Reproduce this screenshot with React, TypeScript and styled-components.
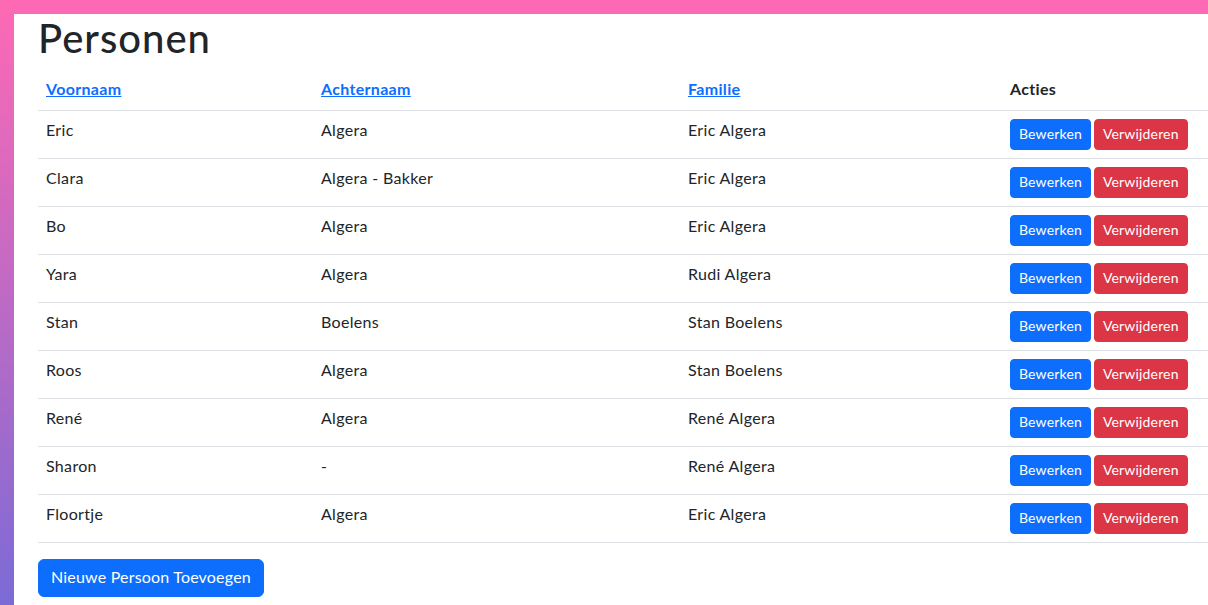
import React from "react";
import styled, { createGlobalStyle } from "styled-components";

const Global = createGlobalStyle`
  html, body { margin: 0; padding: 0; }
  body {
    width: 1208px;
    height: 605px;
    overflow: hidden;
    background: linear-gradient(180deg, #ff69b4 0px, #7b6bd6 605px);
    font-family: Lato, "Noto Sans", sans-serif;
    letter-spacing: 0.02em;
    color: #212529;
  }
`;

const Panel = styled.main`
  margin: 14px 0 0 14px;
  background: #fff;
  min-height: 620px;
  padding: 0 0 0 24px;
  box-sizing: border-box;
  width: 1220px;
`;

const Title = styled.h1`
  margin: 0 0 8px;
  font-size: 40px;
  font-weight: 500;
  line-height: 48px;
  letter-spacing: 0.025em;
  color: #212529;
`;

const Table = styled.table`
  border-collapse: collapse;
  table-layout: fixed;
  width: 1190px;
  margin-bottom: 16px;
  font-size: 16px;
  line-height: 24px;
`;

const Th = styled.th`
  text-align: left;
  padding: 7px 8px 9px;
  font-weight: 700;
  border-bottom: 1px solid #dee2e6;
`;

const Td = styled.td<{ $actions?: boolean }>`
  padding: ${(p) => (p.$actions ? "8px" : "7px 8px 9px")};
  border-bottom: 1px solid #dee2e6;
  vertical-align: top;
  height: 31px;
  line-height: 24px;
`;

const SortLink = styled.a`
  color: #0d6efd;
  text-decoration: underline;
  cursor: pointer;
`;

const Btn = styled.button<{ $variant: "primary" | "danger"; $size?: "sm" | "md" }>`
  font-family: inherit;
  letter-spacing: 0.012em;
  border: 1px solid ${(p) => (p.$variant === "primary" ? "#0d6efd" : "#dc3545")};
  background: ${(p) => (p.$variant === "primary" ? "#0d6efd" : "#dc3545")};
  color: #fff;
  font-size: ${(p) => (p.$size === "md" ? "16px" : "14px")};
  line-height: ${(p) => (p.$size === "md" ? "24px" : "21px")};
  padding: ${(p) => (p.$size === "md" ? "5px 12px 7px" : "3px 8px 5px")};
  border-radius: ${(p) => (p.$size === "md" ? "6px" : "4px")};
  cursor: pointer;
`;

const Actions = styled.div`
  display: flex;
  gap: 3px;
`;

const people = [
  ["Eric", "Algera", "Eric Algera"],
  ["Clara", "Algera - Bakker", "Eric Algera"],
  ["Bo", "Algera", "Eric Algera"],
  ["Yara", "Algera", "Rudi Algera"],
  ["Stan", "Boelens", "Stan Boelens"],
  ["Roos", "Algera", "Stan Boelens"],
  ["René", "Algera", "René Algera"],
  ["Sharon", "-", "René Algera"],
  ["Floortje", "Algera", "Eric Algera"],
];

export default function App() {
  return (
    <>
      <Global />
      <Panel>
        <Title>Personen</Title>
        <Table>
          <colgroup>
            <col style={{ width: 275 }} />
            <col style={{ width: 367 }} />
            <col style={{ width: 322 }} />
            <col style={{ width: 226 }} />
          </colgroup>
          <thead>
            <tr>
              <Th><SortLink>Voornaam</SortLink></Th>
              <Th><SortLink>Achternaam</SortLink></Th>
              <Th><SortLink>Familie</SortLink></Th>
              <Th>Acties</Th>
            </tr>
          </thead>
          <tbody>
            {people.map(([f, l, fam], i) => (
              <tr key={i}>
                <Td>{f}</Td>
                <Td>{l}</Td>
                <Td>{fam}</Td>
                <Td $actions>
                  <Actions>
                    <Btn $variant="primary">Bewerken</Btn>
                    <Btn $variant="danger">Verwijderen</Btn>
                  </Actions>
                </Td>
              </tr>
            ))}
          </tbody>
        </Table>
        <Btn $variant="primary" $size="md">Nieuwe Persoon Toevoegen</Btn>
      </Panel>
    </>
  );
}
